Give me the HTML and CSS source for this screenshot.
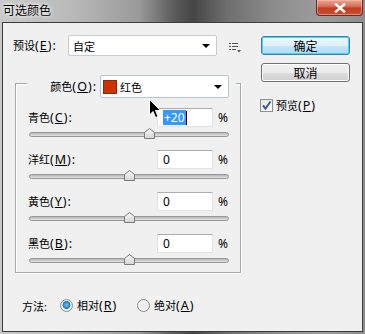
FILE: index.html
```html
<!DOCTYPE html>
<html lang="zh-CN">
<head>
  <meta charset="UTF-8" />
  <title>可选颜色</title>
  <link rel="stylesheet" href="styles.css">
</head>
<body>
  <div class="window">
    <div class="titlebar">
      <span class="title">可选颜色</span>
      <button class="close" aria-label="关闭">
        <svg width="14" height="10" viewBox="0 0 14 10"><path d="M3 1.5 L11 8.5 M11 1.5 L3 8.5" stroke="#fff" stroke-width="2.4" stroke-linecap="square"/></svg>
      </button>
    </div>

    <div class="client">
      <div class="main">
        <div class="left">
          <div class="preset-row">
            <label class="lbl">预设<span class="acc">(<u>E</u>):</span></label>
            <div class="select preset-select"><span>自定</span><i class="arrow"></i></div>
            <svg class="preset-menu" width="12" height="10" viewBox="0 0 12 10">
              <rect x="0" y="0" width="2" height="1" fill="#555"/>
              <rect x="3" y="0" width="6" height="1" fill="#555"/>
              <rect x="0" y="3" width="2" height="1" fill="#555"/>
              <rect x="3" y="3" width="6" height="1" fill="#555"/>
              <rect x="0" y="6" width="2" height="1" fill="#555"/>
              <rect x="3" y="6" width="4" height="1" fill="#555"/>
              <path d="M8 7 L12 7 L10 9.5 Z" fill="#555"/>
            </svg>
          </div>

          <div class="group">
            <div class="group-head">
              <label class="head-lbl">颜色<span class="acc">(<u>O</u>):</span></label>
              <div class="select color-select"><span class="swatch"></span><span>红色</span><i class="arrow"></i></div>
            </div>

            <div class="channel">
              <div class="channel-row">
                <label class="ch-lbl">青色<span class="acc">(<u>C</u>):</span></label>
                <div class="field"><span class="sel">+20</span><span class="caret"></span></div>
                <span class="pct">%</span>
              </div>
              <div class="slider"><div class="track"></div><svg class="thumb" style="left:60%" width="11" height="11" viewBox="0 0 11 11"><path d="M0.5 4.5 L5.5 0.5 L10.5 4.5 L10.5 10.5 L0.5 10.5 Z" fill="url(#thumbfill)" stroke="#7b7b7b"/></svg></div>
            </div>

            <div class="channel">
              <div class="channel-row">
                <label class="ch-lbl">洋红<span class="acc">(<u>M</u>):</span></label>
                <div class="field"><span>0</span></div>
                <span class="pct">%</span>
              </div>
              <div class="slider"><div class="track"></div><svg class="thumb" style="left:50%" width="11" height="11" viewBox="0 0 11 11"><path d="M0.5 4.5 L5.5 0.5 L10.5 4.5 L10.5 10.5 L0.5 10.5 Z" fill="url(#thumbfill)" stroke="#7b7b7b"/></svg></div>
            </div>

            <div class="channel">
              <div class="channel-row">
                <label class="ch-lbl">黄色<span class="acc">(<u>Y</u>):</span></label>
                <div class="field"><span>0</span></div>
                <span class="pct">%</span>
              </div>
              <div class="slider"><div class="track"></div><svg class="thumb" style="left:50%" width="11" height="11" viewBox="0 0 11 11"><path d="M0.5 4.5 L5.5 0.5 L10.5 4.5 L10.5 10.5 L0.5 10.5 Z" fill="url(#thumbfill)" stroke="#7b7b7b"/></svg></div>
            </div>

            <div class="channel">
              <div class="channel-row">
                <label class="ch-lbl">黑色<span class="acc">(<u>B</u>):</span></label>
                <div class="field"><span>0</span></div>
                <span class="pct">%</span>
              </div>
              <div class="slider"><div class="track"></div><svg class="thumb" style="left:50%" width="11" height="11" viewBox="0 0 11 11"><path d="M0.5 4.5 L5.5 0.5 L10.5 4.5 L10.5 10.5 L0.5 10.5 Z" fill="url(#thumbfill)" stroke="#7b7b7b"/></svg></div>
            </div>
          </div>
        </div>

        <div class="right">
          <button class="btn default">确定</button>
          <button class="btn">取消</button>
          <label class="check">
            <span class="box">
              <svg width="11" height="11" viewBox="0 0 11 11"><path d="M2 5.5 L4.5 8.5 L9.5 1.5" fill="none" stroke="#3b5998" stroke-width="2"/></svg>
            </span>
            <span>预览<span class="acc">(<u>P</u>)</span></span>
          </label>
        </div>
      </div>

      <div class="method">
        <span class="method-lbl">方法:</span>
        <label class="radio-item"><span class="radio on"></span><span>相对<span class="acc">(<u>R</u>)</span></span></label>
        <label class="radio-item"><span class="radio"></span><span>绝对<span class="acc">(<u>A</u>)</span></span></label>
      </div>
    </div>

    <svg class="cursor" width="13" height="20" viewBox="0 0 13 20">
      <path d="M0.5 0.5 L0.5 16 L4 12.5 L6.5 18.5 L9 17.5 L6.5 11.5 L11.5 11.5 Z" fill="#000" stroke="#fff" stroke-width="1"/>
    </svg>

    <svg width="0" height="0" class="defs">
      <defs>
        <linearGradient id="thumbfill" x1="0" y1="0" x2="0" y2="1">
          <stop offset="0" stop-color="#fbfbfb"/>
          <stop offset="1" stop-color="#d4d4d4"/>
        </linearGradient>
      </defs>
    </svg>
  </div>
</body>
</html>
```

FILE: styles.css
```css
:root {
  --face: #f0f0f0;
  --text: #000;
  --field-border: #c5cbd3;
}

* {
  box-sizing: border-box;
}

body {
  margin: 0;
  font-family: "Noto Sans", "Noto Sans CJK SC", sans-serif;
  font-size: 11px;
  color: var(--text);
}

.window {
  position: relative;
  width: 365px;
  height: 334px;
  overflow: hidden;
  background: linear-gradient(90deg, #c9c9c9 0%, #b9b9b9 20%, #9a9a9a 38%, #5a5a5a 48%, #454545 53%, #6e6e6e 62%, #8c8c8c 75%, #9d9d9d 88%, #8e8e8e 100%);
}

/* title bar */
.titlebar {
  height: 22px;
  display: flex;
  justify-content: space-between;
  align-items: flex-start;
  padding-left: 3px;
}

.title {
  font-family: "Noto Sans CJK SC", sans-serif;
  font-size: 12px;
  line-height: 18px;
  padding-top: 1px;
  text-shadow: 0 0 6px #fff, 0 0 3px #fff;
}

.close {
  width: 47px;
  height: 16px;
  margin-right: 2px;
  padding: 0;
  border: 1px solid #6d2a20;
  border-top: none;
  border-radius: 0 0 4px 4px;
  background: linear-gradient(#e8a593 0%, #d8765f 40%, #c43b22 55%, #c9502f 100%);
  box-shadow: inset 0 0 0 1px rgba(255, 200, 180, 0.5);
  display: flex;
  align-items: center;
  justify-content: center;
}

/* client area */
.client {
  margin: 0 2px;
  height: 310px;
  border: 1px solid #3c3c3c;
  background: var(--face);
  padding-top: 12px;
}

.main {
  display: flex;
}

.left {
  width: 238px;
}

.preset-row {
  display: flex;
  align-items: center;
  height: 21px;
  padding-left: 10px;
}

.lbl {
  width: 55px;
}

.acc {
  font-size: 12.5px;
  letter-spacing: 1px;
}

.select {
  position: relative;
  display: flex;
  align-items: center;
  background: #fff;
  border: 1px solid var(--field-border);
  border-radius: 2px;
  padding-left: 4px;
}

.arrow {
  position: absolute;
  right: 6px;
  top: 50%;
  margin-top: -2px;
  border-left: 4px solid transparent;
  border-right: 4px solid transparent;
  border-top: 4px solid #000;
}

.preset-select {
  width: 149px;
  height: 21px;
}

.preset-menu {
  margin-left: 12px;
  margin-top: 5px;
}

/* group box */
.group {
  margin: 27px 0 0 12px;
  width: 226px;
  height: 190px;
  border: 1px solid #a9a9a9;
  box-shadow: 1px 1px 0 #fff, inset 1px 1px 0 #fff;
}

.group-head {
  display: flex;
  align-items: center;
  margin: -9px 0 0 11px;
  width: 209px;
  height: 23px;
  background: var(--face);
}

.head-lbl {
  width: 70px;
  text-align: right;
  margin-right: 3px;
}

.color-select {
  width: 129px;
  height: 23px;
  border-color: #b7c6d6;
  gap: 3px;
  padding-left: 2px;
}

.swatch {
  width: 14px;
  height: 14px;
  background: #cc3300;
  border: 1px solid #8a2a10;
}

.channel {
  padding: 0 12px 0 12px;
}

.group-head + .channel {
  margin-top: 10px;
}

.channel-row {
  display: flex;
  align-items: center;
  height: 19px;
}

.ch-lbl {
  width: 129px;
}

.field {
  width: 56px;
  height: 19px;
  display: flex;
  align-items: center;
  padding-left: 5px;
  background: #fff;
  border: 1px solid #e2e3ea;
  border-top-color: #abadb3;
  font-size: 12px;
}

.sel {
  background: #3399ff;
  color: #fff;
  padding: 0 1px;
  line-height: 15px;
}

.caret {
  width: 1px;
  height: 14px;
  background: #000;
}

.pct {
  margin-left: 5px;
  font-size: 12px;
}

.slider {
  position: relative;
  margin: 1px 0 11px 1px;
  width: 200px;
  height: 11px;
}

.track {
  position: absolute;
  left: 0;
  right: 0;
  top: 4px;
  height: 5px;
  border: 1px solid #979797;
  border-radius: 3px;
  background: linear-gradient(#b4b4b4, #e4e4e4);
}

.thumb {
  position: absolute;
  top: 0;
  margin-left: -5px;
}

/* right column */
.right {
  display: flex;
  flex-direction: column;
  align-items: flex-start;
  margin-left: 20px;
  padding-top: 1px;
}

.btn {
  width: 89px;
  height: 19px;
  padding: 0;
  font-family: "Noto Sans CJK SC", sans-serif;
  font-size: 12px;
  color: #000;
  border: 1px solid #707070;
  border-radius: 3px;
  background: linear-gradient(#f2f2f2 0%, #ebebeb 50%, #dddddd 51%, #cfcfcf 100%);
  box-shadow: inset 0 0 0 1px #fcfcfc;
}

.btn + .btn {
  margin-top: 8px;
}

.btn.default {
  border-color: #3c7fb1;
  background: linear-gradient(#ecf7fd 0%, #dcf0fb 50%, #c4e5f8 51%, #b2dcf4 100%);
  box-shadow: inset 0 0 0 1px #48d1f9;
}

.check {
  display: flex;
  align-items: center;
  margin: 15px 0 0 -1px;
  gap: 3px;
}

.box {
  width: 13px;
  height: 13px;
  border: 1px solid #8e8f8f;
  background: linear-gradient(135deg, #e6e6e6, #fbfbfb);
  display: flex;
  align-items: center;
  justify-content: center;
}

/* method */
.method {
  display: flex;
  align-items: center;
  margin-top: 26px;
  padding-left: 19px;
  height: 13px;
}

.method-lbl {
  width: 38px;
}

.radio-item {
  display: flex;
  align-items: center;
  gap: 4px;
  width: 77px;
}

.radio {
  width: 13px;
  height: 13px;
  border-radius: 50%;
  border: 1px solid #8e8f8f;
  background: radial-gradient(circle, #e8e8e8 0, #f4f4f4 60%, #dcdcdc 100%);
}

.radio.on {
  background: radial-gradient(circle at 50% 45%, #6cc6f4 0, #1d79c0 45%, #f4f4f4 52%, #e0e0e0 100%);
}

.cursor {
  position: absolute;
  left: 149px;
  top: 99px;
}

.defs {
  position: absolute;
}
```
